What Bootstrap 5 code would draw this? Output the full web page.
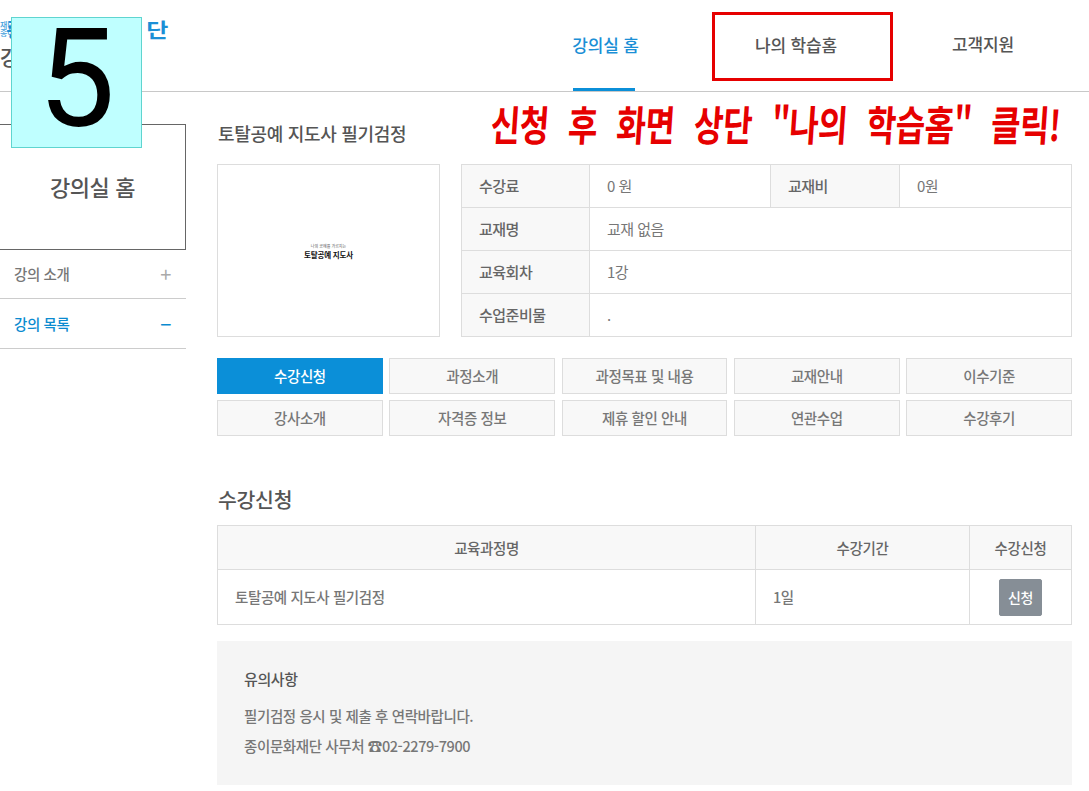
<!DOCTYPE html>
<html lang="ko">
<head>
<meta charset="utf-8">
<title>강의실 홈</title>
<link rel="stylesheet" href="https://cdn.jsdelivr.net/npm/bootstrap@5.3.0/dist/css/bootstrap.min.css">
<style>
html,body{height:791px;overflow:hidden}
body{font-family:"Noto Sans CJK KR","Noto Sans",sans-serif;color:#666;font-size:14.5px;letter-spacing:-.4px;background:#fff;position:relative}
.top-head{height:92px;border-bottom:1px solid #c8c8c8}
.brand-area{width:573px;position:relative}
.logo-tail{position:absolute;right:399px;top:14px;font-size:20px;font-weight:700;color:#1b8fd6;line-height:32px;white-space:nowrap;letter-spacing:5px;transform:scaleX(1.2);transform-origin:right center}
.logo-small{position:absolute;left:0;top:21px;font-size:8px;font-weight:500;line-height:8px;color:#3fa0dc;letter-spacing:0;white-space:nowrap}
.brand-sub{position:absolute;left:0;top:41px;font-size:21px;font-weight:500;color:#555;line-height:30px;white-space:nowrap}
.gnb-item{display:flex;align-items:center;justify-content:center;font-size:17px;letter-spacing:-.2px;font-weight:500;color:#555;height:91px;position:relative}
.gnb-1{width:62px;color:#1b8fd6;margin-right:77px;border-bottom:3px solid #0b8fd8;padding-top:1px;padding-left:3px;white-space:nowrap}
.gnb-2{width:181px;height:69px;margin-top:12px;border:3px solid #e60000;padding:0 13px 4px 0}
.gnb-3{width:180px;padding-bottom:3px}
.side-col{width:186px;padding-top:32px}
.side-box{height:126px;border:1px solid #666;border-left:0;font-size:22px;font-weight:500;color:#555;padding-bottom:2px}
.side-item{height:49px;border-bottom:1px solid #ccc;padding:0 15px 0 14px;font-weight:500;color:#777}
.side-item.is-on{height:50px;color:#0b8bd0;padding-top:1px}
.side-sign{font-size:20px;font-weight:400;color:#aaa}
.is-on .side-sign{color:#0b8bd0}
.main-col{width:855px;margin-left:31px;padding-top:29px}
.course-title{font-size:18px;font-weight:500;color:#555;line-height:24px;margin:0 0 19px;letter-spacing:-.3px;padding-left:1px}
.thumb-box{width:224px;height:173px;border:1px solid #ddd;padding-top:2px}
.thumb-up{font-size:4px;color:#555;line-height:5px;letter-spacing:0}
.thumb-text{font-size:7.5px;font-weight:700;color:#111;line-height:11px;letter-spacing:-.2px}
.info-table{width:610px;height:173px;margin:0 0 0 21px;table-layout:fixed;border-color:#ddd;font-size:15px;letter-spacing:-.5px}
.info-table th,.info-table td,.apply-table th,.apply-table td{border:1px solid #ddd;vertical-align:middle;color:#777;font-weight:400;box-shadow:none}
.info-table th,.info-table td{padding:0 17px;height:43px}
.info-table th{background:#f8f8f8;color:#666;font-weight:500}
.tab-grid{display:grid;grid-template-columns:repeat(5,1fr);gap:6px 6.5px;margin-top:21px}
.tab-cell{height:36px;display:flex;align-items:center;justify-content:center;border:1px solid #ddd;background:#f8f8f8;color:#777;font-weight:500;padding-bottom:1px}
.tab-cell.is-on{background:#0b8fd8;border-color:#0b8fd8;color:#fff}
.apply-title{font-size:20.5px;font-weight:500;color:#555;line-height:28px;margin:49px 0 12px;padding-left:1px;letter-spacing:-.3px}
.apply-table{table-layout:fixed;margin:0 0 16px;width:854px}
.apply-table thead th{height:44px;background:#f8f8f8;text-align:center;padding:0;color:#666;font-weight:500}
.apply-table td{height:55px;padding:0 17px;font-weight:500}
.apply-btn{width:43px;height:37px;padding:0;background:#868e96;border-color:#868e96;color:#fff;font-size:14px;font-weight:500;letter-spacing:-.4px;border-radius:2px}
.notice-box{height:144px;background:#f5f5f5;padding:25px 27px;font-weight:500;color:#777}
.notice-head{font-size:15px;font-weight:500;color:#555;line-height:26px;margin:0 0 9px}
.notice-line{line-height:30px;margin:0}
.step-tag{position:absolute;left:11px;top:17px;width:131px;height:131px;background:#bfffff;border:1px solid #5fd5d0;color:#000;font-family:Roboto,sans-serif;font-weight:400;font-size:138px;line-height:122px;text-align:center;letter-spacing:0}
.hand-note{position:absolute;left:491px;top:95px;display:flex;font-size:32px;line-height:56px;font-weight:700;color:#e60000;letter-spacing:-.5px;white-space:nowrap;transform:scaleY(1.3) skewX(-5deg)}
.hand-note span{margin-right:19.5px}
.hand-note span:last-child{margin-right:0}
</style>
</head>
<body>
<header class="top-head d-flex">
  <div class="brand-area">
    <span class="logo-small">재단법인<br>종이문화</span>
    <span class="logo-tail">종이문화재단</span>
    <span class="brand-sub">강의실 홈</span>
  </div>
  <nav class="d-flex">
    <a class="gnb-item gnb-1 text-decoration-none">강의실 홈</a>
    <a class="gnb-item gnb-2 text-decoration-none">나의 학습홈</a>
    <a class="gnb-item gnb-3 text-decoration-none">고객지원</a>
  </nav>
</header>
<div class="d-flex">
  <aside class="side-col">
    <div class="side-box d-flex align-items-center justify-content-center">강의실 홈</div>
    <div class="side-item d-flex align-items-center justify-content-between"><span>강의 소개</span><span class="side-sign">+</span></div>
    <div class="side-item is-on d-flex align-items-center justify-content-between"><span>강의 목록</span><span class="side-sign">−</span></div>
  </aside>
  <main class="main-col">
    <h1 class="course-title">토탈공예 지도사 필기검정</h1>
    <div class="d-flex">
      <div class="thumb-box d-flex flex-column align-items-center justify-content-center text-center">
        <div class="thumb-up">나의 공예를 가르치는</div>
        <div class="thumb-text">토탈공예 지도사</div>
      </div>
      <table class="table info-table">
        <colgroup><col style="width:128px"><col style="width:181px"><col style="width:129px"><col style="width:172px"></colgroup>
        <tr><th>수강료</th><td>0 원</td><th>교재비</th><td>0원</td></tr>
        <tr><th>교재명</th><td colspan="3">교재 없음</td></tr>
        <tr><th>교육회차</th><td colspan="3">1강</td></tr>
        <tr><th>수업준비물</th><td colspan="3">.</td></tr>
      </table>
    </div>
    <div class="tab-grid">
      <div class="tab-cell is-on">수강신청</div>
      <div class="tab-cell">과정소개</div>
      <div class="tab-cell">과정목표 및 내용</div>
      <div class="tab-cell">교재안내</div>
      <div class="tab-cell">이수기준</div>
      <div class="tab-cell">강사소개</div>
      <div class="tab-cell">자격증 정보</div>
      <div class="tab-cell">제휴 할인 안내</div>
      <div class="tab-cell">연관수업</div>
      <div class="tab-cell">수강후기</div>
    </div>
    <h2 class="apply-title">수강신청</h2>
    <table class="table apply-table">
      <colgroup><col style="width:538px"><col style="width:214px"><col style="width:102px"></colgroup>
      <thead><tr><th>교육과정명</th><th>수강기간</th><th>수강신청</th></tr></thead>
      <tbody><tr><td>토탈공예 지도사 필기검정</td><td>1일</td><td class="text-center p-0"><button type="button" class="btn apply-btn">신청</button></td></tr></tbody>
    </table>
    <section class="notice-box">
      <h3 class="notice-head">유의사항</h3>
      <p class="notice-line">필기검정 응시 및 제출 후 연락바랍니다.</p>
      <p class="notice-line">종이문화재단 사무처 ☎02-2279-7900</p>
    </section>
  </main>
</div>
<div class="step-tag">5</div>
<div class="hand-note"><span>신청</span><span>후</span><span>화면</span><span>상단</span><span>"나의</span><span>학습홈"</span><span>클릭!</span></div>
<script src="https://cdn.jsdelivr.net/npm/bootstrap@5.3.0/dist/js/bootstrap.bundle.min.js"></script>
</body>
</html>
